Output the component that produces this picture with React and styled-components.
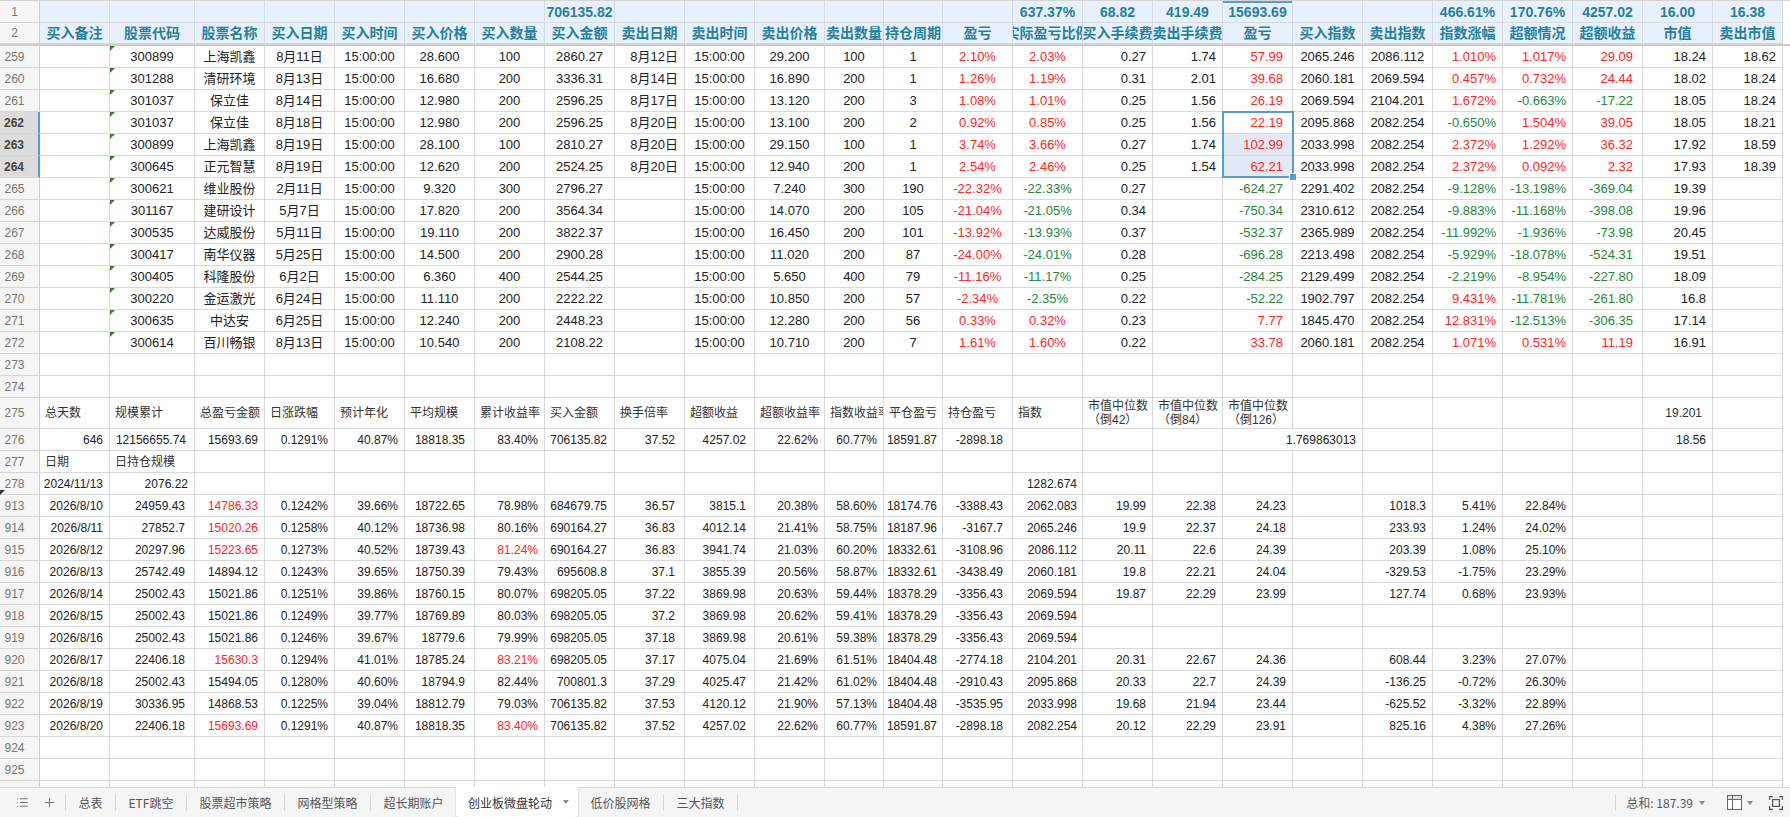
import React from 'react';
import styled, { createGlobalStyle, css } from 'styled-components';
import { List, Plus } from 'lucide-react';

const GlobalStyle = createGlobalStyle`
  html, body { margin: 0; padding: 0; background: #fff; }
  body {
    font-family: "Liberation Sans", "Noto Sans CJK SC", Arial, sans-serif;
    overflow: hidden;
  }
`;

const COLS = '40px 70px 85px repeat(9, 70px) 59px 59px repeat(12, 70px)';
const RED = '#ff2525';
const GREEN = '#23883a';
const JUST = { l: 'flex-start', c: 'center', r: 'flex-end' };

const Page = styled.div`
  width: 1790px;
  height: 817px;
  display: flex;
  flex-direction: column;
  overflow: hidden;
`;

const SheetArea = styled.div`
  position: relative;
  flex: 1;
  overflow: hidden;
  background: #fff;
`;

const Row = styled.div`
  display: grid;
  grid-template-columns: ${COLS};
  height: ${p => p.$h || 22}px;
`;

const TopRow = styled(Row)`
  box-sizing: border-box;
  border-top: 1px solid #d4d4d4;
`;

const FreezeLine = styled.div`
  height: 2px;
  background: #cdcdcd;
`;

const RowHead = styled.div`
  position: relative;
  box-sizing: border-box;
  display: flex;
  align-items: center;
  justify-content: center;
  padding-right: 10px;
  font-size: 12px;
  background: ${p => (p.$active ? '#dcdcdc' : '#f5f5f5')};
  color: ${p => (p.$active ? '#444' : '#777')};
  font-weight: ${p => (p.$active ? 700 : 400)};
  border-bottom: 1px solid #d6d6d6;
  border-right: ${p => (p.$active ? '2px solid #5b9bd5' : '1px solid #cfcfcf')};
  ${p =>
    p.$mark &&
    css`
      &::after {
        content: '';
        position: absolute;
        left: 0;
        bottom: -1px;
        border-top: 5px solid #3a3a3a;
        border-right: 5px solid transparent;
      }
    `}
`;

const Cell = styled.div`
  position: relative;
  box-sizing: border-box;
  min-width: 0;
  display: flex;
  align-items: center;
  justify-content: ${p => JUST[p.$a || 'l']};
  padding: 0 ${p => (p.$pad == null ? 5 : p.$pad)}px;
  border-right: 1px solid #d9d9d9;
  border-bottom: 1px solid #d9d9d9;
  overflow: hidden;
  white-space: nowrap;
  font-size: ${p => p.$fs || 13}px;
  line-height: 14px;
  color: ${p => p.$c || '#222'};
  background: ${p => (p.$sel ? '#e2eaf6' : '#fff')};
  grid-column: span ${p => p.$span || 1};
  ${p =>
    p.$flag &&
    css`
      &::before {
        content: '';
        position: absolute;
        top: 0;
        left: 0;
        border-top: 5px solid #3b7d2e;
        border-right: 5px solid transparent;
      }
    `}
`;

const HeadCell = styled(Cell)`
  background: #e8f1fb;
  color: #25809f;
  font-weight: 700;
  font-size: 14px;
  border-right-color: #d3dce6;
  border-bottom-color: #d3dce6;
  font-family: "Liberation Sans", "Noto Sans CJK SC", sans-serif;
  ${p => p.$mark && css`box-shadow: inset 0 2px 0 #5b9bd5;`}
`;

const TwoLine = styled.span`
  display: block;
  white-space: nowrap;
  line-height: 14px;
`;

const Selection = styled.div`
  position: absolute;
  left: 1222px;
  top: 111px;
  width: 72px;
  height: 67px;
  box-sizing: border-box;
  border: 2px solid #5b9bd5;
  pointer-events: none;
  &::after {
    content: '';
    position: absolute;
    right: -5px;
    bottom: -5px;
    width: 6px;
    height: 6px;
    background: #5b9bd5;
    border: 1px solid #fff;
  }
`;

/* ---------- tab bar ---------- */
const TabBar = styled.div`
  flex: 0 0 30px;
  box-sizing: border-box;
  border-top: 1px solid #dadada;
  background: #f5f5f5;
  display: flex;
  align-items: stretch;
  font-size: 12px;
  color: #555;
  font-family: "Noto Sans CJK SC", "Liberation Sans", sans-serif;
`;

const Controls = styled.div`
  display: flex;
  align-items: center;
  padding-left: 16px;
  color: #555;
  svg + svg { margin-left: 13px; }
`;

const Sep = styled.span`
  align-self: center;
  flex: none;
  width: 1px;
  height: 16px;
  background: #d6d6d6;
  margin-left: ${p => p.$ml || 0}px;
`;

const Tab = styled.div`
  display: flex;
  align-items: center;
  padding: 0 12.5px;
  white-space: nowrap;
  color: #555;
`;

const ActiveTab = styled(Tab)`
  background: #fff;
  color: #333;
  padding: 0 9px 0 12px;
  margin-top: -1px;
  box-shadow: 0 1px 3px rgba(0, 0, 0, 0.18);
  border-radius: 0 0 3px 3px;
`;

const Caret = styled.span`
  flex: none;
  width: 0;
  height: 0;
  border-left: 3px solid transparent;
  border-right: 3px solid transparent;
  border-top: 4px solid #8a8a8a;
  margin-left: ${p => p.$ml || 0}px;
`;

const Status = styled.div`
  margin-left: auto;
  display: flex;
  align-items: center;
  padding-right: 7px;
  color: #555;
`;

const StatusText = styled.span`
  margin-left: 10px;
  white-space: nowrap;
`;

const IconBox = styled.span`
  display: flex;
  margin-left: ${p => p.$ml || 0}px;
`;

/* ---------- data ---------- */
const HEAD1 = { 7: '706135.82', 14: '637.37%', 15: '68.82', 16: '419.49', 17: '15693.69', 20: '466.61%', 21: '170.76%', 22: '4257.02', 23: '16.00', 24: '16.38' };
const HEAD2 = ['买入备注', '股票代码', '股票名称', '买入日期', '买入时间', '买入价格', '买入数量', '买入金额', '卖出日期', '卖出时间', '卖出价格', '卖出数量', '持仓周期', '盈亏', '实际盈亏比例', '买入手续费', '卖出手续费', '盈亏', '买入指数', '卖出指数', '指数涨幅', '超额情况', '超额收益', '市值', '卖出市值'];

const TOP = [
  [259, ['', '300899', '上海凯鑫', '8月11日', '15:00:00', '28.600', '100', '2860.27', '8月12日', '15:00:00', '29.200', '100', '1', '2.10%', '2.03%', '0.27', '1.74', '57.99', '2065.246', '2086.112', '1.010%', '1.017%', '29.09', '18.24', '18.62']],
  [260, ['', '301288', '清研环境', '8月13日', '15:00:00', '16.680', '200', '3336.31', '8月14日', '15:00:00', '16.890', '200', '1', '1.26%', '1.19%', '0.31', '2.01', '39.68', '2060.181', '2069.594', '0.457%', '0.732%', '24.44', '18.02', '18.24']],
  [261, ['', '301037', '保立佳', '8月14日', '15:00:00', '12.980', '200', '2596.25', '8月17日', '15:00:00', '13.120', '200', '3', '1.08%', '1.01%', '0.25', '1.56', '26.19', '2069.594', '2104.201', '1.672%', '-0.663%', '-17.22', '18.05', '18.24']],
  [262, ['', '301037', '保立佳', '8月18日', '15:00:00', '12.980', '200', '2596.25', '8月20日', '15:00:00', '13.100', '200', '2', '0.92%', '0.85%', '0.25', '1.56', '22.19', '2095.868', '2082.254', '-0.650%', '1.504%', '39.05', '18.05', '18.21']],
  [263, ['', '300899', '上海凯鑫', '8月19日', '15:00:00', '28.100', '100', '2810.27', '8月20日', '15:00:00', '29.150', '100', '1', '3.74%', '3.66%', '0.27', '1.74', '102.99', '2033.998', '2082.254', '2.372%', '1.292%', '36.32', '17.92', '18.59']],
  [264, ['', '300645', '正元智慧', '8月19日', '15:00:00', '12.620', '200', '2524.25', '8月20日', '15:00:00', '12.940', '200', '1', '2.54%', '2.46%', '0.25', '1.54', '62.21', '2033.998', '2082.254', '2.372%', '0.092%', '2.32', '17.93', '18.39']],
  [265, ['', '300621', '维业股份', '2月11日', '15:00:00', '9.320', '300', '2796.27', '', '15:00:00', '7.240', '300', '190', '-22.32%', '-22.33%', '0.27', '', '-624.27', '2291.402', '2082.254', '-9.128%', '-13.198%', '-369.04', '19.39', '']],
  [266, ['', '301167', '建研设计', '5月7日', '15:00:00', '17.820', '200', '3564.34', '', '15:00:00', '14.070', '200', '105', '-21.04%', '-21.05%', '0.34', '', '-750.34', '2310.612', '2082.254', '-9.883%', '-11.168%', '-398.08', '19.96', '']],
  [267, ['', '300535', '达威股份', '5月11日', '15:00:00', '19.110', '200', '3822.37', '', '15:00:00', '16.450', '200', '101', '-13.92%', '-13.93%', '0.37', '', '-532.37', '2365.989', '2082.254', '-11.992%', '-1.936%', '-73.98', '20.45', '']],
  [268, ['', '300417', '南华仪器', '5月25日', '15:00:00', '14.500', '200', '2900.28', '', '15:00:00', '11.020', '200', '87', '-24.00%', '-24.01%', '0.28', '', '-696.28', '2213.498', '2082.254', '-5.929%', '-18.078%', '-524.31', '19.51', '']],
  [269, ['', '300405', '科隆股份', '6月2日', '15:00:00', '6.360', '400', '2544.25', '', '15:00:00', '5.650', '400', '79', '-11.16%', '-11.17%', '0.25', '', '-284.25', '2129.499', '2082.254', '-2.219%', '-8.954%', '-227.80', '18.09', '']],
  [270, ['', '300220', '金运激光', '6月24日', '15:00:00', '11.110', '200', '2222.22', '', '15:00:00', '10.850', '200', '57', '-2.34%', '-2.35%', '0.22', '', '-52.22', '1902.797', '2082.254', '9.431%', '-11.781%', '-261.80', '16.8', '']],
  [271, ['', '300635', '中达安', '6月25日', '15:00:00', '12.240', '200', '2448.23', '', '15:00:00', '12.280', '200', '56', '0.33%', '0.32%', '0.23', '', '7.77', '1845.470', '2082.254', '12.831%', '-12.513%', '-306.35', '17.14', '']],
  [272, ['', '300614', '百川畅银', '8月13日', '15:00:00', '10.540', '200', '2108.22', '', '15:00:00', '10.710', '200', '7', '1.61%', '1.60%', '0.22', '', '33.78', '2060.181', '2082.254', '1.071%', '0.531%', '11.19', '16.91', '']],
];

const TOP_ALIGN = ['l', 'c', 'c', 'c', 'c', 'c', 'c', 'c', 'r', 'c', 'c', 'c', 'c', 'c', 'c', 'r', 'r', 'r', 'c', 'c', 'r', 'r', 'r', 'r', 'r'];
const TOP_PAD = [5, 0, 0, 0, 0, 0, 0, 0, 6, 0, 0, 0, 0, 0, 0, 6, 6, 9, 0, 0, 6, 6, 9, 6, 6];
const SIGN_COLS = new Set([14, 17, 20, 21, 22]);

function topColor(i, v) {
  if (!v) return undefined;
  if (i === 13) return RED;
  if (SIGN_COLS.has(i)) return v.startsWith('-') ? GREEN : RED;
  return undefined;
}

const LOW = [
  [913, ['2026/8/10', '24959.43', '14786.33', '0.1242%', '39.66%', '18722.65', '78.98%', '684679.75', '36.57', '3815.1', '20.38%', '58.60%', '18174.76', '-3388.43', '2062.083', '19.99', '22.38', '24.23', '', '1018.3', '5.41%', '22.84%'], [2]],
  [914, ['2026/8/11', '27852.7', '15020.26', '0.1258%', '40.12%', '18736.98', '80.16%', '690164.27', '36.83', '4012.14', '21.41%', '58.75%', '18187.96', '-3167.7', '2065.246', '19.9', '22.37', '24.18', '', '233.93', '1.24%', '24.02%'], [2]],
  [915, ['2026/8/12', '20297.96', '15223.65', '0.1273%', '40.52%', '18739.43', '81.24%', '690164.27', '36.83', '3941.74', '21.03%', '60.20%', '18332.61', '-3108.96', '2086.112', '20.11', '22.6', '24.39', '', '203.39', '1.08%', '25.10%'], [2, 6]],
  [916, ['2026/8/13', '25742.49', '14894.12', '0.1243%', '39.65%', '18750.39', '79.43%', '695608.8', '37.1', '3855.39', '20.56%', '58.87%', '18332.61', '-3438.49', '2060.181', '19.8', '22.21', '24.04', '', '-329.53', '-1.75%', '23.29%'], []],
  [917, ['2026/8/14', '25002.43', '15021.86', '0.1251%', '39.86%', '18760.15', '80.07%', '698205.05', '37.22', '3869.98', '20.63%', '59.44%', '18378.29', '-3356.43', '2069.594', '19.87', '22.29', '23.99', '', '127.74', '0.68%', '23.93%'], []],
  [918, ['2026/8/15', '25002.43', '15021.86', '0.1249%', '39.77%', '18769.89', '80.03%', '698205.05', '37.2', '3869.98', '20.62%', '59.41%', '18378.29', '-3356.43', '2069.594'], []],
  [919, ['2026/8/16', '25002.43', '15021.86', '0.1246%', '39.67%', '18779.6', '79.99%', '698205.05', '37.18', '3869.98', '20.61%', '59.38%', '18378.29', '-3356.43', '2069.594'], []],
  [920, ['2026/8/17', '22406.18', '15630.3', '0.1294%', '41.01%', '18785.24', '83.21%', '698205.05', '37.17', '4075.04', '21.69%', '61.51%', '18404.48', '-2774.18', '2104.201', '20.31', '22.67', '24.36', '', '608.44', '3.23%', '27.07%'], [2, 6]],
  [921, ['2026/8/18', '25002.43', '15494.05', '0.1280%', '40.60%', '18794.9', '82.44%', '700801.3', '37.29', '4025.47', '21.42%', '61.02%', '18404.48', '-2910.43', '2095.868', '20.33', '22.7', '24.39', '', '-136.25', '-0.72%', '26.30%'], []],
  [922, ['2026/8/19', '30336.95', '14868.53', '0.1225%', '39.04%', '18812.79', '79.03%', '706135.82', '37.53', '4120.12', '21.90%', '57.13%', '18404.48', '-3535.95', '2033.998', '19.68', '21.94', '23.44', '', '-625.52', '-3.32%', '22.89%'], []],
  [923, ['2026/8/20', '22406.18', '15693.69', '0.1291%', '40.87%', '18818.35', '83.40%', '706135.82', '37.52', '4257.02', '22.62%', '60.77%', '18591.87', '-2898.18', '2082.254', '20.12', '22.29', '23.91', '', '825.16', '4.38%', '27.26%'], [2, 6]],
  [924, [], []],
  [925, [], []],
  ['', [], []],
];

const L_PAD = [6, 9, 6, 6, 6, 9, 6, 7, 9, 8, 6, 6, 5, 9, 5, 6, 6, 6, 6, 6, 6, 6, 6, 6, 6];

const LABELS = ['总天数', '规模累计', '总盈亏金额', '日涨跌幅', '预计年化', '平均规模', '累计收益率', '买入金额', '换手倍率', '超额收益', '超额收益率', '指数收益率', '平仓盈亏', '持仓盈亏', '指数', ['市值中位数', '（倒42）'], ['市值中位数', '（倒84）'], ['市值中位数', '（倒126）']];

const SUMMARY = ['646', '12156655.74', '15693.69', '0.1291%', '40.87%', '18818.35', '83.40%', '706135.82', '37.52', '4257.02', '22.62%', '60.77%', '18591.87', '-2898.18'];
const SUM_PAD = [6, 8, 6, 6, 6, 9, 6, 7, 9, 8, 6, 6, 5, 9];

const range = n => Array.from({ length: n }, (_, i) => i);

function EmptyCells({ from, to, fs }) {
  return range(to - from).map(i => <Cell key={from + i} $fs={fs} />);
}

function HeaderRows() {
  return (
    <>
      <TopRow $h={23}>
        <RowHead>1</RowHead>
        {range(25).map(i => (
          <HeadCell key={i} $a="c" $pad={0} $mark={i === 17}>
            {HEAD1[i] || ''}
          </HeadCell>
        ))}
      </TopRow>
      <Row $h={21}>
        <RowHead>2</RowHead>
        {HEAD2.map((t, i) => (
          <HeadCell key={i} $a="c" $pad={0}>
            {t}
          </HeadCell>
        ))}
      </Row>
      <FreezeLine />
    </>
  );
}

function TradeRow({ num, cells }) {
  const active = num >= 262 && num <= 264;
  return (
    <Row>
      <RowHead $active={active}>{num}</RowHead>
      {cells.map((v, i) => (
        <Cell
          key={i}
          $a={TOP_ALIGN[i]}
          $pad={TOP_PAD[i]}
          $c={topColor(i, v)}
          $flag={i === 1}
          $sel={i === 17 && (num === 263 || num === 264)}
        >
          {v}
        </Cell>
      ))}
    </Row>
  );
}

function DailyRow({ num, cells, reds }) {
  return (
    <Row>
      <RowHead>{num}</RowHead>
      {range(25).map(i => {
        const v = cells[i] || '';
        return (
          <Cell key={i} $fs={12} $a="r" $pad={L_PAD[i]} $c={reds.includes(i) ? RED : undefined}>
            {v}
          </Cell>
        );
      })}
    </Row>
  );
}

function SummaryRows() {
  return (
    <>
      <Row $h={31}>
        <RowHead>275</RowHead>
        {range(25).map(i => {
          const lab = LABELS[i];
          if (i === 23) {
            return (
              <Cell key={i} $fs={12} $a="r" $pad={10} $c="#333">
                19.201
              </Cell>
            );
          }
          if (Array.isArray(lab)) {
            return (
              <Cell key={i} $fs={12} $a="l" $pad={5} $c="#333">
                <span>
                  <TwoLine>{lab[0]}</TwoLine>
                  <TwoLine>{lab[1]}</TwoLine>
                </span>
              </Cell>
            );
          }
          return (
            <Cell key={i} $fs={12} $a="l" $pad={5} $c="#333">
              {lab || ''}
            </Cell>
          );
        })}
      </Row>
      <Row>
        <RowHead>276</RowHead>
        {SUMMARY.map((v, i) => (
          <Cell key={i} $fs={12} $a="r" $pad={SUM_PAD[i]}>
            {v}
          </Cell>
        ))}
        <EmptyCells from={14} to={17} fs={12} />
        <Cell $fs={12} $a="r" $pad={6} $span={2}>
          1.769863013
        </Cell>
        <EmptyCells from={19} to={23} fs={12} />
        <Cell $fs={12} $a="r" $pad={6}>
          18.56
        </Cell>
        <Cell $fs={12} />
      </Row>
      <Row>
        <RowHead>277</RowHead>
        <Cell $fs={12} $a="l" $c="#333">日期</Cell>
        <Cell $fs={12} $a="l" $c="#333">日持仓规模</Cell>
        <EmptyCells from={2} to={25} fs={12} />
      </Row>
      <Row>
        <RowHead $mark>278</RowHead>
        <Cell $fs={12} $a="r" $pad={6}>2024/11/13</Cell>
        <Cell $fs={12} $a="r" $pad={6}>2076.22</Cell>
        <EmptyCells from={2} to={14} fs={12} />
        <Cell $fs={12} $a="r" $pad={5}>1282.674</Cell>
        <EmptyCells from={15} to={25} fs={12} />
      </Row>
    </>
  );
}

function BlankRow({ num }) {
  return (
    <Row>
      <RowHead>{num}</RowHead>
      <EmptyCells from={0} to={25} />
    </Row>
  );
}

function GridIcon() {
  return (
    <svg width="15" height="15" viewBox="0 0 15 15" fill="none" stroke="#666" strokeWidth="1">
      <rect x="0.5" y="0.5" width="14" height="14" fill="#fff" />
      <rect x="1" y="1" width="13" height="3.5" fill="#e4e4e4" stroke="none" />
      <line x1="0.5" y1="4.5" x2="14.5" y2="4.5" />
      <line x1="5.5" y1="0.5" x2="5.5" y2="14.5" />
    </svg>
  );
}

function FullIcon() {
  return (
    <svg width="14" height="14" viewBox="0 0 14 14" fill="none" stroke="#555" strokeWidth="1.2">
      <path d="M0.6 4V0.6H4M10 0.6H13.4V4M13.4 10V13.4H10M4 13.4H0.6V10" />
      <rect x="3.6" y="3.6" width="6.8" height="6.8" />
    </svg>
  );
}

function SheetTabs() {
  const before = ['总表', 'ETF跳空', '股票超市策略', '网格型策略'];
  return (
    <TabBar>
      <Controls>
        <List size={13} strokeWidth={1.5} />
        <Plus size={15} strokeWidth={1.2} />
      </Controls>
      <Sep $ml={8} />
      {before.map(t => (
        <React.Fragment key={t}>
          <Tab>{t}</Tab>
          <Sep />
        </React.Fragment>
      ))}
      <Tab>超长期账户</Tab>
      <ActiveTab>
        创业板微盘轮动
        <Caret $ml={11} />
      </ActiveTab>
      <Tab>低价股网格</Tab>
      <Sep />
      <Tab>三大指数</Tab>
      <Sep />
      <Status>
        <Sep />
        <StatusText>总和: 187.39</StatusText>
        <Caret $ml={6} />
        <IconBox $ml={22}>
          <GridIcon />
        </IconBox>
        <Caret $ml={5} />
        <IconBox $ml={16}>
          <FullIcon />
        </IconBox>
      </Status>
    </TabBar>
  );
}

export default function App() {
  return (
    <>
      <GlobalStyle />
      <Page>
        <SheetArea>
          <HeaderRows />
          {TOP.map(([num, cells]) => (
            <TradeRow key={num} num={num} cells={cells} />
          ))}
          <BlankRow num={273} />
          <BlankRow num={274} />
          <SummaryRows />
          {LOW.map(([num, cells, reds], i) => (
            <DailyRow key={i} num={num} cells={cells} reds={reds} />
          ))}
          <Selection />
        </SheetArea>
        <SheetTabs />
      </Page>
    </>
  );
}
